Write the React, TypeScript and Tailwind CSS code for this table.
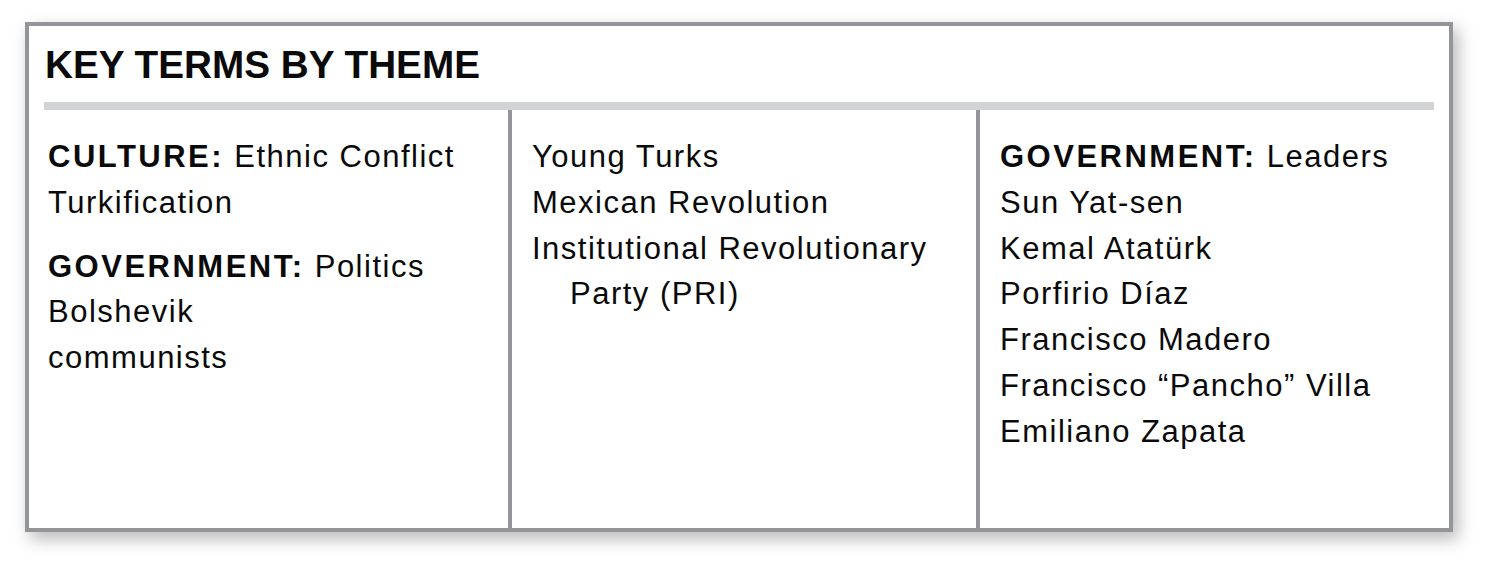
const font = { fontFamily: '"Liberation Sans", Arial, Helvetica, sans-serif' };

function Label({ head, rest }: { head: string; rest: string }) {
  return (
    <div>
      <span className="font-bold tracking-[2.5px]">{head}</span> {rest}
    </div>
  );
}

export default function App() {
  return (
    <div className="min-h-[572px] bg-white pl-[25px] pt-[22px]" style={font}>
      <div className="w-[1428px] h-[510px] bg-white border-4 border-[#939598] shadow-[5px_7px_16px_rgba(0,0,0,0.28)] flex flex-col">
        <div className="pt-[20px] px-[15px]">
          <h1 className="pl-[1px] text-[38.7px] leading-[38px] font-bold text-[#0a0a0a]">KEY TERMS BY THEME</h1>
          <div className="mt-[18px] h-[8px] bg-[#d1d3d4]" />
        </div>

        <div className="flex-1 flex px-[15px] text-[31px] leading-[45.8px] tracking-[1.5px] text-[#0a0a0a]">
          <div className="w-[464px] pl-[4px] pt-[24px]">
            <Label head="CULTURE:" rest="Ethnic Conflict" />
            <div>Turkification</div>
            <div className="mt-[18px]">
              <Label head="GOVERNMENT:" rest="Politics" />
            </div>
            <div>Bolshevik</div>
            <div>communists</div>
          </div>

          <div className="w-[4px] bg-[#939598]" />

          <div className="w-[464px] pl-[20px] pt-[24px]">
            <div>Young Turks</div>
            <div>Mexican Revolution</div>
            <div>Institutional Revolutionary</div>
            <div className="pl-[38px]">Party (PRI)</div>
          </div>

          <div className="w-[4px] bg-[#939598]" />

          <div className="flex-1 pl-[20px] pt-[24px]">
            <Label head="GOVERNMENT:" rest="Leaders" />
            <div>Sun Yat-sen</div>
            <div>Kemal Atatürk</div>
            <div>Porfirio Díaz</div>
            <div>Francisco Madero</div>
            <div>Francisco “Pancho” Villa</div>
            <div>Emiliano Zapata</div>
          </div>
        </div>
      </div>
    </div>
  );
}
